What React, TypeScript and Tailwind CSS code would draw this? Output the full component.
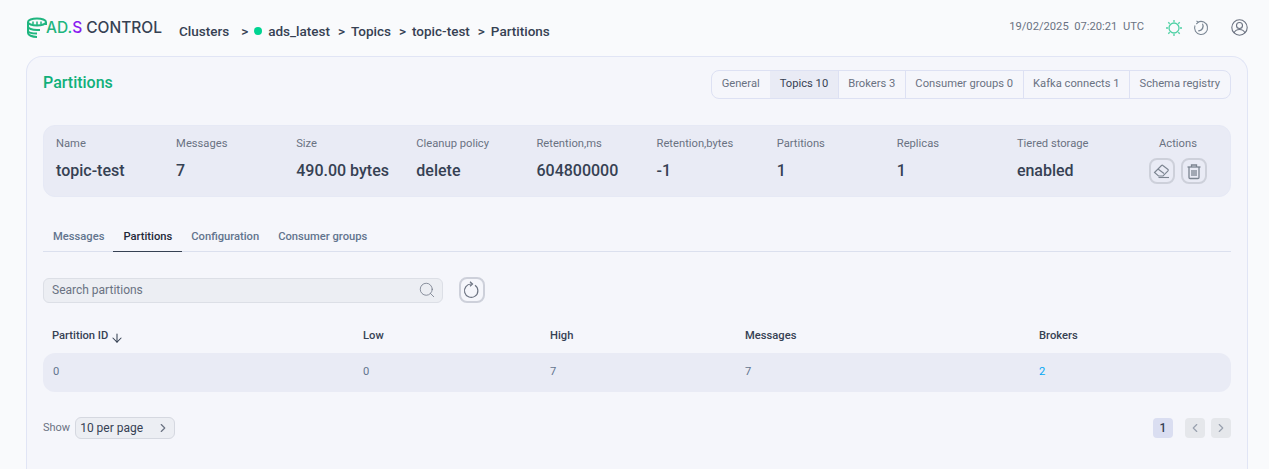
import { ArrowDown, ChevronLeft, ChevronRight, Search } from "lucide-react";

const font = { fontFamily: "Roboto, sans-serif" };

const crumbs = ["ads_latest", "Topics", "topic-test", "Partitions"];

const navTabs = [
  { label: "General" },
  { label: "Topics 10", active: true },
  { label: "Brokers 3" },
  { label: "Consumer groups 0" },
  { label: "Kafka connects 1" },
  { label: "Schema registry" },
];

const stats = [
  ["Name", "topic-test"],
  ["Messages", "7"],
  ["Size", "490.00 bytes"],
  ["Cleanup policy", "delete"],
  ["Retention,ms", "604800000"],
  ["Retention,bytes", "-1"],
  ["Partitions", "1"],
  ["Replicas", "1"],
  ["Tiered storage", "enabled"],
];

const subTabs = ["Messages", "Partitions", "Configuration", "Consumer groups"];

function Logo() {
  return (
    <div className="flex items-center">
      <svg width="24" height="22" viewBox="0 0 24 22" fill="none" stroke="#1fb57f" strokeWidth="2">
        <ellipse cx="11" cy="5" rx="9" ry="3.5" />
        <path d="M7 4.5v3M11 4.5v3.500M15 4.500v3" strokeWidth="1.500" />
        <path d="M2 5v11c0 2 4 4 9 4" />
        <path d="M2 9.500c0 2 4 3.500 9 3.500h3" />
        <path d="M2 13.500c0 2 4 3 9 3" />
        <path d="M20 5v3" />
      </svg>
      <span className="-ml-1 text-[15.5px] font-medium leading-none text-[#1fb57f]" style={{ fontFamily: "Inter, sans-serif" }}>
        AD.<span className="text-[#8a1bf0]">S</span>
      </span>
      <span className="ml-1 text-[15.5px] font-medium leading-none text-gray-700" style={{ fontFamily: "Inter, sans-serif" }}>
        CONTROL
      </span>
    </div>
  );
}

function SunIcon() {
  return (
    <svg width="18" height="18" viewBox="0 0 18 18" fill="none" stroke="#4fd1a5" strokeWidth="1.300">
      <circle cx="9" cy="9" r="5" />
      <path d="M9 1v2M9 15v2M1 9h2M15 9h2M3.300 3.300l1.400 1.400M13.300 13.300l1.400 1.400M3.300 14.700l1.400-1.400M13.300 4.700l1.400-1.400" />
    </svg>
  );
}

function MoonHistory() {
  return (
    <svg width="16" height="16" viewBox="0 0 16 16" fill="none" stroke="#7b8794" strokeWidth="1.100">
      <path d="M5 2.200A6.500 6.500 0 1 1 2 5.500" />
      <path d="M3.500 0.800l1.700 1.500-1.900 1.700" />
      <path d="M9.500 3.800a4.500 4.500 0 0 1-4.300 7A4.800 4.800 0 0 0 9.500 3.800z" />
    </svg>
  );
}

function UserIcon() {
  return (
    <svg width="17" height="17" viewBox="0 0 17 17" fill="none" stroke="#6b7280" strokeWidth="1.100">
      <circle cx="8.500" cy="8.500" r="7.700" />
      <circle cx="8.500" cy="6.500" r="3" />
      <path d="M3 14c1-2.500 3-3.500 5.500-3.500S13 11.500 14 14" />
    </svg>
  );
}

function RefreshIcon() {
  return (
    <svg width="18" height="18" viewBox="0 0 18 18" fill="none" stroke="#6b7280" strokeWidth="1.200">
      <path d="M12 4.200A6.700 6.700 0 1 1 8.500 3" />
      <path d="M7 0.800l2.500 2.200L7 5.200" />
    </svg>
  );
}

function EraserIcon() {
  return (
    <svg width="18" height="16" viewBox="0 0 18 16" fill="none" stroke="#7b8490" strokeWidth="1.100">
      <path d="M1.500 9.500L8.500 2.500a1 1 0 0 1 1.400 0L15 6.500a1 1 0 0 1 0 1.400L10 13H5.500z" />
      <path d="M5 6l6 4.500" />
      <path d="M5.500 14.500H16" />
    </svg>
  );
}

function TrashIcon() {
  return (
    <svg width="16" height="17" viewBox="0 0 16 17" fill="none" stroke="#7b8490" strokeWidth="1.300">
      <path d="M1.500 4h13" />
      <path d="M5.500 4V2h5v2" />
      <path d="M3 4v10.500a1 1 0 0 0 1 1h8a1 1 0 0 0 1-1V4" />
      <path d="M6 7v6M8 7v6M10 7v6" />
    </svg>
  );
}

export default function App() {
  return (
    <div className="h-[469px] overflow-hidden bg-[#f9fafc] pl-[26px] pr-[21px] text-gray-700" style={font}>
      <header className="flex h-14 items-center">
        <Logo />
        <nav className="ml-[17px] mt-1.5 flex items-center text-[13.5px] font-medium text-gray-700">
          <span>Clusters</span>
          <span className="ml-3">&gt;</span>
          <span className="ml-1.5 h-2 w-2 rounded-full bg-emerald-400" />
          <span className="ml-1.5">{crumbs[0]}</span>
          {crumbs.slice(1).map((c) => (
            <span key={c} className="ml-2 flex gap-1.5">
              <span>&gt;</span>
              <span>{c}</span>
            </span>
          ))}
        </nav>
        <div className="ml-auto flex items-center">
          <span className="mb-0.5 mr-px text-[11.2px] text-gray-500">19/02/2025&nbsp; 07:20:21&nbsp; UTC</span>
          <span className="ml-5"><SunIcon /></span>
          <span className="ml-2.5"><MoonHistory /></span>
          <span className="ml-5.5"><UserIcon /></span>
        </div>
      </header>

      <main className="h-[420px] rounded-t-2xl border border-b-0 border-[#e1e5f5] bg-[#f5f6fb] px-4 pt-[13px]">
        <div className="flex items-center justify-between">
          <h1 className="pb-1 text-base font-medium text-[#10b07a]">Partitions</h1>
          <div className="flex h-[29px] overflow-hidden rounded-lg border border-[#dde1f3] text-[11.2px]">
            {navTabs.map((t) => (
              <span
                key={t.label}
                className={`-ml-px flex items-center border-r border-[#dde1f3] px-2.5 first:ml-0 last:border-r-0 ${t.active ? "bg-[#e9ebf5] text-gray-700" : "text-gray-500"}`}
              >
                {t.label}
              </span>
            ))}
          </div>
        </div>

        <section className="mt-[26px] flex h-[72px] items-start rounded-xl border border-[#e6e9f5] bg-[#e9ebf5] pl-3 pr-[23px] pt-2.5">
          {stats.map(([label, value]) => (
            <div key={label} className="flex-1">
              <div className="text-[11.2px] leading-4 text-gray-500">{label}</div>
              <div className="mt-[7px] text-base font-medium text-gray-700">{value}</div>
            </div>
          ))}
          <div className="ml-3 flex flex-col items-center">
            <div className="text-[11.2px] leading-4 text-gray-500">Actions</div>
            <div className="mt-1.5 flex gap-1.5">
              <button className="flex h-[26px] w-[26px] items-center justify-center rounded-lg border-2 border-[#cdd0da]">
                <EraserIcon />
              </button>
              <button className="flex h-[26px] w-[26px] items-center justify-center rounded-lg border-2 border-[#cdd0da]">
                <TrashIcon />
              </button>
            </div>
          </div>
        </section>

        <div className="mt-[22px] flex h-[33px] border-b border-[#dbe0ee]">
          {subTabs.map((t) => (
            <span
              key={t}
              className={`-mb-px -ml-px flex items-center border-b px-2.5 pt-1 text-[11.2px] font-medium first:ml-0 ${t === "Partitions" ? "border-gray-700 text-gray-800" : "border-transparent text-slate-500"}`}
            >
              {t}
            </span>
          ))}
        </div>

        <div className="mt-[25px] flex items-center gap-4">
          <div className="flex h-[25px] w-100 items-center justify-between rounded-md border border-[#dcdfe6] bg-[#eceef3] pl-2 pr-1.5">
            <span className="text-xs text-gray-500">Search partitions</span>
            <Search className="h-4.5 w-4.5 text-gray-500" strokeWidth={1} />
          </div>
          <button className="flex h-[26px] w-[26px] items-center justify-center rounded-lg border-2 border-[#cdd0da]">
            <RefreshIcon />
          </button>
        </div>

        <div className="mt-[27px] grid h-[23px] grid-cols-[320px_187px_195px_294px_1fr] text-[11.2px] font-medium leading-none text-gray-700">
          <span className="flex items-start pl-[9px]">
            Partition ID <ArrowDown className="ml-0.5 mt-px h-3.5 w-3.5" strokeWidth={1.800} />
          </span>
          <span>Low</span>
          <span>High</span>
          <span>Messages</span>
          <span>Brokers</span>
        </div>

        <div className="grid h-[39px] grid-cols-[320px_187px_195px_294px_1fr] items-center rounded-xl bg-[#e9ebf5] text-[11.2px] text-slate-500">
          <span className="pl-2.5">0</span>
          <span>0</span>
          <span>7</span>
          <span>7</span>
          <span className="text-sky-500">2</span>
        </div>

        <div className="mt-[25px] flex items-center">
          <span className="text-[11px] text-gray-500">Show</span>
          <div className="ml-[5px] flex h-[22px] w-[100px] items-center justify-between rounded-md border border-[#d5d8e0] bg-[#eceef3] px-1">
            <span className="text-xs text-gray-700">10 per page</span>
            <ChevronRight className="h-3.5 w-3.5 text-gray-500" />
          </div>
          <div className="ml-auto flex items-center">
            <span className="flex h-5 w-5 items-center justify-center rounded bg-[#dadef1] text-xs font-medium text-gray-700">1</span>
            <button className="ml-3 flex h-5 w-5 items-center justify-center rounded bg-gray-200">
              <ChevronLeft className="h-3.5 w-3.5 text-gray-400" />
            </button>
            <button className="ml-1.5 flex h-5 w-5 items-center justify-center rounded bg-gray-200">
              <ChevronRight className="h-3.5 w-3.5 text-gray-400" />
            </button>
          </div>
        </div>
      </main>
    </div>
  );
}
